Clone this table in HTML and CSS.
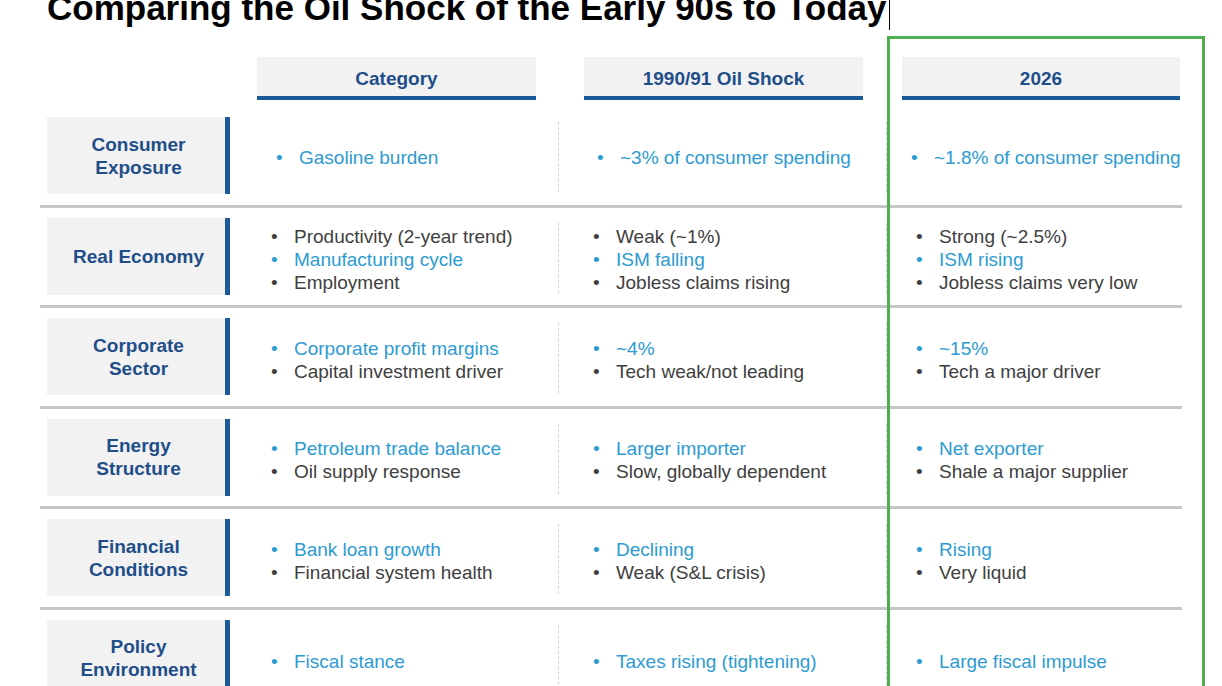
FILE: index.html
```html
<!DOCTYPE html>
<html lang="en">
<head>
<meta charset="utf-8">
<title>Comparing the Oil Shock of the Early 90s to Today</title>
<link rel="stylesheet" href="styles.css">
</head>
<body>
<h1 class="title">Comparing the Oil Shock of the Early 90s to Today<span class="caret"></span></h1>

<div class="table">
  <div class="head-row">
    <div></div>
    <div class="hcell hc1">Category</div>
    <div class="hcell hc2">1990/91 Oil Shock</div>
    <div class="hcell hc3">2026</div>
  </div>

  <div class="row first">
    <div class="label">Consumer<br>Exposure</div>
    <div class="cell c1"><ul><li class="blue">Gasoline burden</li></ul></div>
    <div class="cell c2"><ul><li class="blue">~3% of consumer spending</li></ul></div>
    <div class="cell c3"><ul><li class="blue">~1.8% of consumer spending</li></ul></div>
  </div>

  <div class="row">
    <div class="label">Real Economy</div>
    <div class="cell c1"><ul><li>Productivity (2-year trend)</li><li class="blue">Manufacturing cycle</li><li>Employment</li></ul></div>
    <div class="cell c2"><ul><li>Weak (~1%)</li><li class="blue">ISM falling</li><li>Jobless claims rising</li></ul></div>
    <div class="cell c3"><ul><li>Strong (~2.5%)</li><li class="blue">ISM rising</li><li>Jobless claims very low</li></ul></div>
  </div>

  <div class="row">
    <div class="label">Corporate<br>Sector</div>
    <div class="cell c1"><ul><li class="blue">Corporate profit margins</li><li>Capital investment driver</li></ul></div>
    <div class="cell c2"><ul><li class="blue">~4%</li><li>Tech weak/not leading</li></ul></div>
    <div class="cell c3"><ul><li class="blue">~15%</li><li>Tech a major driver</li></ul></div>
  </div>

  <div class="row">
    <div class="label">Energy<br>Structure</div>
    <div class="cell c1"><ul><li class="blue">Petroleum trade balance</li><li>Oil supply response</li></ul></div>
    <div class="cell c2"><ul><li class="blue">Larger importer</li><li>Slow, globally dependent</li></ul></div>
    <div class="cell c3"><ul><li class="blue">Net exporter</li><li>Shale a major supplier</li></ul></div>
  </div>

  <div class="row">
    <div class="label">Financial<br>Conditions</div>
    <div class="cell c1"><ul><li class="blue">Bank loan growth</li><li>Financial system health</li></ul></div>
    <div class="cell c2"><ul><li class="blue">Declining</li><li>Weak (S&amp;L crisis)</li></ul></div>
    <div class="cell c3"><ul><li class="blue">Rising</li><li>Very liquid</li></ul></div>
  </div>

  <div class="row">
    <div class="label">Policy<br>Environment</div>
    <div class="cell c1"><ul><li class="blue">Fiscal stance</li></ul></div>
    <div class="cell c2"><ul><li class="blue">Taxes rising (tightening)</li></ul></div>
    <div class="cell c3"><ul><li class="blue">Large fiscal impulse</li></ul></div>
  </div>
</div>

<div class="highlight"></div>
</body>
</html>
```

FILE: styles.css
```css
html, body {
  margin: 0;
  padding: 0;
  background: #ffffff;
}

body {
  font-family: "Liberation Sans", Arial, sans-serif;
  width: 1222px;
  position: relative;
  overflow: hidden;
  height: 686px;
}

.title {
  margin: -12px 0 0 0;
  padding-left: 47px;
  font-size: 35px;
  line-height: 40px;
  font-weight: bold;
  color: #000000;
  white-space: nowrap;
}

.caret {
  display: inline-block;
  width: 1px;
  height: 42px;
  background: #000000;
  margin-left: 2px;
  vertical-align: -10px;
}

.table {
  margin: 27px 0 0 40px;
  width: 1142px;
}

.head-row,
.row {
  display: grid;
  grid-template-columns: 183px 328px 328px 296px;
  padding-left: 7px;
}

.hcell {
  background: #f2f2f2;
  border-bottom: 4px solid #1a5a96;
  color: #1f4e89;
  font-weight: bold;
  font-size: 19px;
  display: flex;
  align-items: center;
  justify-content: center;
  padding-top: 4px;
  box-sizing: content-box;
  height: 35px;
}

.hc1 { margin-left: 27px; width: 279px; }
.hc2 { margin-left: 26px; width: 279px; }
.hc3 { margin-left: 16px; width: 278px; }

.row {
  grid-template-rows: 77px;
  padding-top: 10px;
  padding-bottom: 10.6px;
  border-bottom: 3px solid #c6c6c6;
}

.row.first {
  padding-top: 17px;
}

.label {
  height: 77px;
  background: #f2f2f2;
  border-right: 5px solid #1a5a96;
  box-sizing: border-box;
  padding-left: 5px;
  display: flex;
  align-items: center;
  justify-content: center;
  text-align: center;
  color: #1f4e89;
  font-weight: bold;
  font-size: 19px;
  line-height: 23px;
}

.cell {
  margin: 5px 0 2px 0;
  display: flex;
  align-items: center;
  min-height: 0;
}

.c2, .c3 {
  border-left: 1px dashed #d2d2d2;
}

.c1 { padding-left: 41px; }
.c2 { padding-left: 34px; }
.c3 { padding-left: 29px; }

.first .c1 { padding-left: 46px; }
.first .c2 { padding-left: 38px; }
.first .c3 { padding-left: 24px; }

.cell ul {
  list-style: none;
  margin: 0;
  padding: 3px 0 0 0;
}

.first .cell ul {
  padding-top: 0;
}

.cell li {
  display: flex;
  font-size: 19px;
  line-height: 23px;
  color: #404040;
  white-space: nowrap;
}

.cell li::before {
  content: "\2022";
  width: 23px;
  flex: none;
}

.cell li.blue {
  color: #2d9bd1;
}

.highlight {
  position: absolute;
  left: 887px;
  top: 36px;
  width: 318px;
  height: 700px;
  box-sizing: border-box;
  border: 3px solid #4cb050;
  pointer-events: none;
}
```
